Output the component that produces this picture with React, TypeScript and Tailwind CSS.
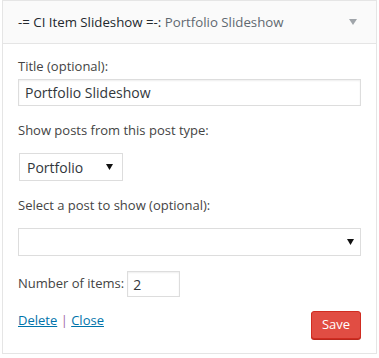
export default function App() {
  return (
    <div className="w-[379px] h-[358px] bg-white pt-0 pl-[2px] font-['Open_Sans',sans-serif] text-[13px] text-[#444]">
      <div className="w-[375px] h-[354px] border border-[#e5e5e5] bg-white">
        <div className="h-[43px] flex items-center justify-between bg-[#fafafa] border-b border-[#e5e5e5] pl-[15px] pr-[19px]">
          <h3 className="text-[13.25px] font-normal text-[#23282d] pt-[1px]">
            -= CI Item Slideshow =-: <span className="text-[#5f6870]">Portfolio Slideshow</span>
          </h3>
          <svg width="8" height="6" viewBox="0 0 8 6">
            <path d="M0 0 H8 L4 6 Z" fill="#a0a5aa" />
          </svg>
        </div>
        <div className="px-[15px] pt-[12px]">
          <p className="leading-[20px]">Title (optional):</p>
          <div className="mt-[3px] h-[27px] w-[343px] border border-[#ddd] flex items-center px-[6px] text-[14px] text-[#32373c] shadow-[inset_0_1px_2px_rgba(0,0,0,0.07)]">
            Portfolio Slideshow
          </div>
          <p className="mt-[14px] leading-[20px]">Show posts from this post type:</p>
          <div className="mt-[13px] ml-[1px] h-[28px] w-[104px] border border-[#ddd] flex items-center justify-between pl-[7px] pr-[9px] text-[14px] text-[#32373c]">
            <span>Portfolio</span>
            <svg width="7" height="6" viewBox="0 0 7 6">
              <path d="M0 0 H7 L3.5 6 Z" fill="#111" />
            </svg>
          </div>
          <p className="mt-[14px] leading-[20px]">Select a post to show (optional):</p>
          <div className="mt-[13px] h-[28px] w-[343px] border border-[#ddd] flex items-center justify-end pr-[6px]">
            <svg width="7" height="6" viewBox="0 0 7 6">
              <path d="M0 0 H7 L3.5 6 Z" fill="#111" />
            </svg>
          </div>
          <div className="mt-[15px] flex items-center gap-[3px]">
            <span>Number of items:</span>
            <div className="h-[26px] w-[53px] border border-[#ddd] flex items-center px-[5px] text-[14px] text-[#32373c] shadow-[inset_0_1px_2px_rgba(0,0,0,0.07)]">
              2
            </div>
          </div>
          <div className="mt-[14px] flex items-start justify-between">
            <div>
              <a className="text-[#0073aa] underline">Delete</a>
              <span className="text-[#a06ca6]"> | </span>
              <a className="text-[#0073aa] underline">Close</a>
            </div>
            <button className="h-[28px] w-[50px] rounded-[3px] bg-[#e14d43] border border-[#d02c21] text-white text-[13px] shadow-[0_1px_0_#ba281e]">
              Save
            </button>
          </div>
        </div>
      </div>
    </div>
  );
}
